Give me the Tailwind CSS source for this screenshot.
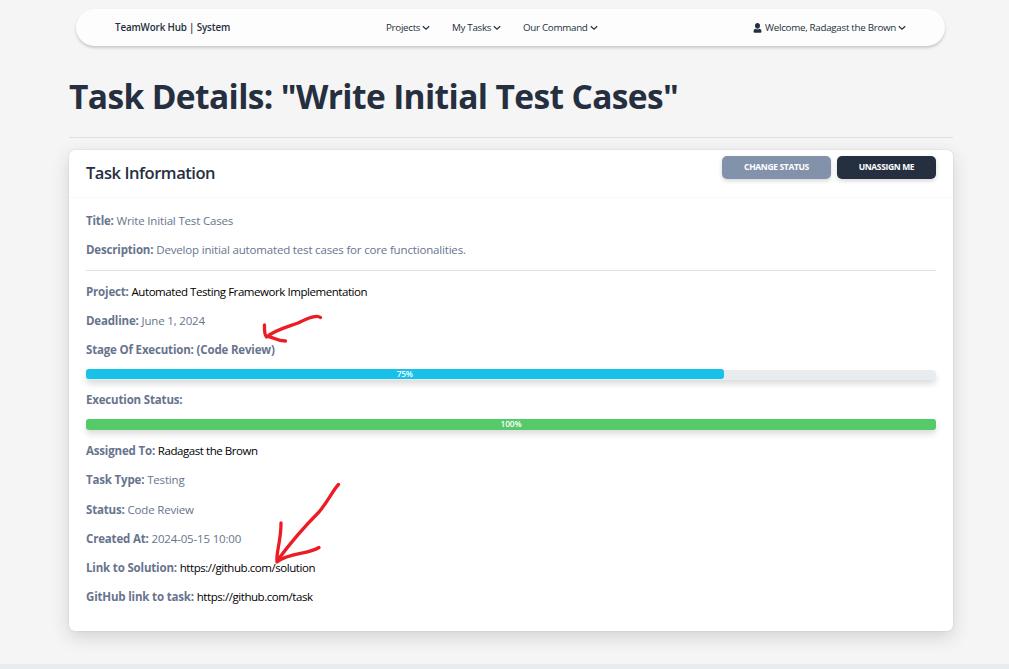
<!DOCTYPE html>
<html lang="en">
<head>
<meta charset="utf-8">
<title>Task Details</title>
<script src="https://cdn.jsdelivr.net/npm/@tailwindcss/browser@4"></script>
</head>
<body class="relative h-[669px] overflow-hidden bg-[#f5f5f5] pt-[9px] font-['Open_Sans',sans-serif] text-[#252f40]">
<nav class="ml-[76px] flex h-[37px] w-[869px] items-center rounded-full bg-[#fdfdfd] pl-[39px] pr-[39px] text-[9.8px] leading-4 whitespace-nowrap shadow-[0_2px_3px_rgba(0,0,0,0.18)]">
  <a class="w-[271px] font-semibold tracking-[-0.15px]">TeamWork Hub | System</a>
  <a class="flex w-[66px] items-center gap-[2px]"><span class="tracking-[-0.3px]">Projects</span><svg class="size-[8px]" viewBox="0 0 8 8" fill="none" stroke="currentColor" stroke-width="1.2"><path d="M.8 2.3 4 5.300 7.200 2.300"/></svg></a>
  <a class="flex w-[71px] items-center gap-[2px]"><span class="tracking-[-0.3px]">My Tasks</span><svg class="size-[8px]" viewBox="0 0 8 8" fill="none" stroke="currentColor" stroke-width="1.2"><path d="M.8 2.3 4 5.300 7.200 2.300"/></svg></a>
  <a class="flex items-center gap-[2px]"><span class="tracking-[-0.3px]">Our Command</span><svg class="size-[8px]" viewBox="0 0 8 8" fill="none" stroke="currentColor" stroke-width="1.2"><path d="M.8 2.3 4 5.300 7.200 2.300"/></svg></a>
  <a class="ml-auto flex items-center gap-[2px]"><svg class="mr-[1px] h-[10px] w-[9px]" viewBox="0 0 9 10" fill="currentColor"><path d="M4.500 0C6 0 7 1.100 7 2.700S6 5.700 4.500 5.700 2 4.300 2 2.700 3 0 4.500 0ZM2.500 5.800Q4.500 7 6.500 5.800Q8.500 6.200 8.500 8.200Q8.500 9.700 7.500 9.700H1.500Q.5 9.700.5 8.200Q.5 6.200 2.500 5.800Z"/></svg><span class="tracking-[-0.3px]">Welcome, Radagast the Brown</span><svg class="size-[8px]" viewBox="0 0 8 8" fill="none" stroke="currentColor" stroke-width="1.2"><path d="M.8 2.3 4 5.300 7.200 2.300"/></svg></a>
</nav>
<main class="ml-[69px] w-[884px]">
  <h1 class="mt-[27px] h-[64px] text-[33.500px] leading-[46px] font-bold tracking-[-0.62px] whitespace-nowrap">Task Details: "Write Initial Test Cases"</h1>
  <hr class="border-[#dedfe1]">
  <section class="mt-[12px] h-[481px] rounded-[6px] bg-white shadow-[0_0_2px_rgba(20,20,20,0.12),0_6px_18px_rgba(20,35,30,0.16)]">
    <header class="flex h-[48px] items-start border-b border-[#f8f8f8] pr-[17px] pl-[17px]">
      <h2 class="mt-[11px] text-[16.500px] leading-6 font-semibold tracking-[-0.45px]">Task Information</h2>
      <button class="mt-[6px] ml-auto h-[23px] w-[109px] rounded-[5px] bg-[#8392ab] text-[8.500px] font-bold tracking-[-0.35px] text-white shadow-[0_2px_4px_rgba(0,0,0,0.16)]">CHANGE STATUS</button>
      <button class="mt-[6px] ml-[6px] h-[23px] w-[99px] rounded-[5px] bg-[#252f40] text-[8.500px] font-bold tracking-[-0.35px] text-white shadow-[0_2px_4px_rgba(0,0,0,0.16)]">UNASSIGN ME</button>
    </header>
    <div class="px-[17px] text-[11.500px] leading-[20px] tracking-[-0.17px] whitespace-nowrap text-[#67748e]">
      <p class="mt-[13px]"><b>Title:</b> <span>Write Initial Test Cases</span></p>
      <p class="mt-[9px]"><b>Description:</b> <span>Develop initial automated test cases for core functionalities.</span></p>
      <hr class="mt-[10px] border-[#dfe1e5]">
      <p class="mt-[11px]"><b>Project:</b> <span class="tracking-[-0.44px] text-black">Automated Testing Framework Implementation</span></p>
      <p class="mt-[9px]"><b>Deadline:</b> <span>June 1, 2024</span></p>
      <p class="mt-[9px]"><b>Stage Of Execution: (Code Review)</b></p>
      <div class="mt-[10px] h-[10px] rounded-[4px] bg-[#e9ecef] shadow-[0_4px_6px_rgba(0,0,0,0.14)]"><div class="h-[10px] w-3/4 -translate-y-px rounded-[3px] bg-[#17c1e8] text-center text-[8.300px] leading-[10px] font-semibold text-white"><span class="tracking-[-0.3px]">75%</span></div></div>
      <p class="mt-[10px]"><b>Execution Status:</b></p>
      <div class="mt-[9px] h-[11px] rounded-[4px] bg-[#e9ecef] shadow-[0_4px_6px_rgba(0,0,0,0.14)]"><div class="h-[11px] rounded-[3px] bg-[#55ca69] text-center text-[8.300px] leading-[10px] font-semibold text-white"><span class="tracking-[-0.15px]">100%</span></div></div>
      <p class="mt-[11px]"><b>Assigned To:</b> <span class="tracking-[-0.44px] text-black">Radagast the Brown</span></p>
      <p class="mt-[9px]"><b>Task Type:</b> <span>Testing</span></p>
      <p class="mt-[10px]"><b>Status:</b> <span>Code Review</span></p>
      <p class="mt-[9px]"><b>Created At:</b> <span>2024-05-15 10:00</span></p>
      <p class="mt-[9px]"><b>Link to Solution:</b> <span class="tracking-[-0.44px] text-black">https://github.com/solution</span></p>
      <p class="mt-[9px]"><b>GitHub link to task:</b> <span class="tracking-[-0.44px] text-black">https://github.com/task</span></p>
    </div>
  </section>
</main>
<footer class="mt-[33px] h-[5px] bg-[#e9ecef]"></footer>
<svg class="pointer-events-none absolute top-0 left-0 h-[669px] w-[1009px]" viewBox="0 0 1009 669" fill="none" stroke="#ed1c24" stroke-width="3.300" stroke-linecap="round" stroke-linejoin="round"><path d="M320.500 317.500C317 314.500 309 317.500 298 323C287 327 275 330 266.500 337C264 334 264.500 330 264.500 325M266.500 336C273 337 277 341 285.500 341"/><path d="M338.500 484.500C333 490 329 500 319 512C304 527 291 542 277 561C276 553 281 541 281 523M277 562C290 552 307 555 319 547.500"/></svg>
</body>
</html>
